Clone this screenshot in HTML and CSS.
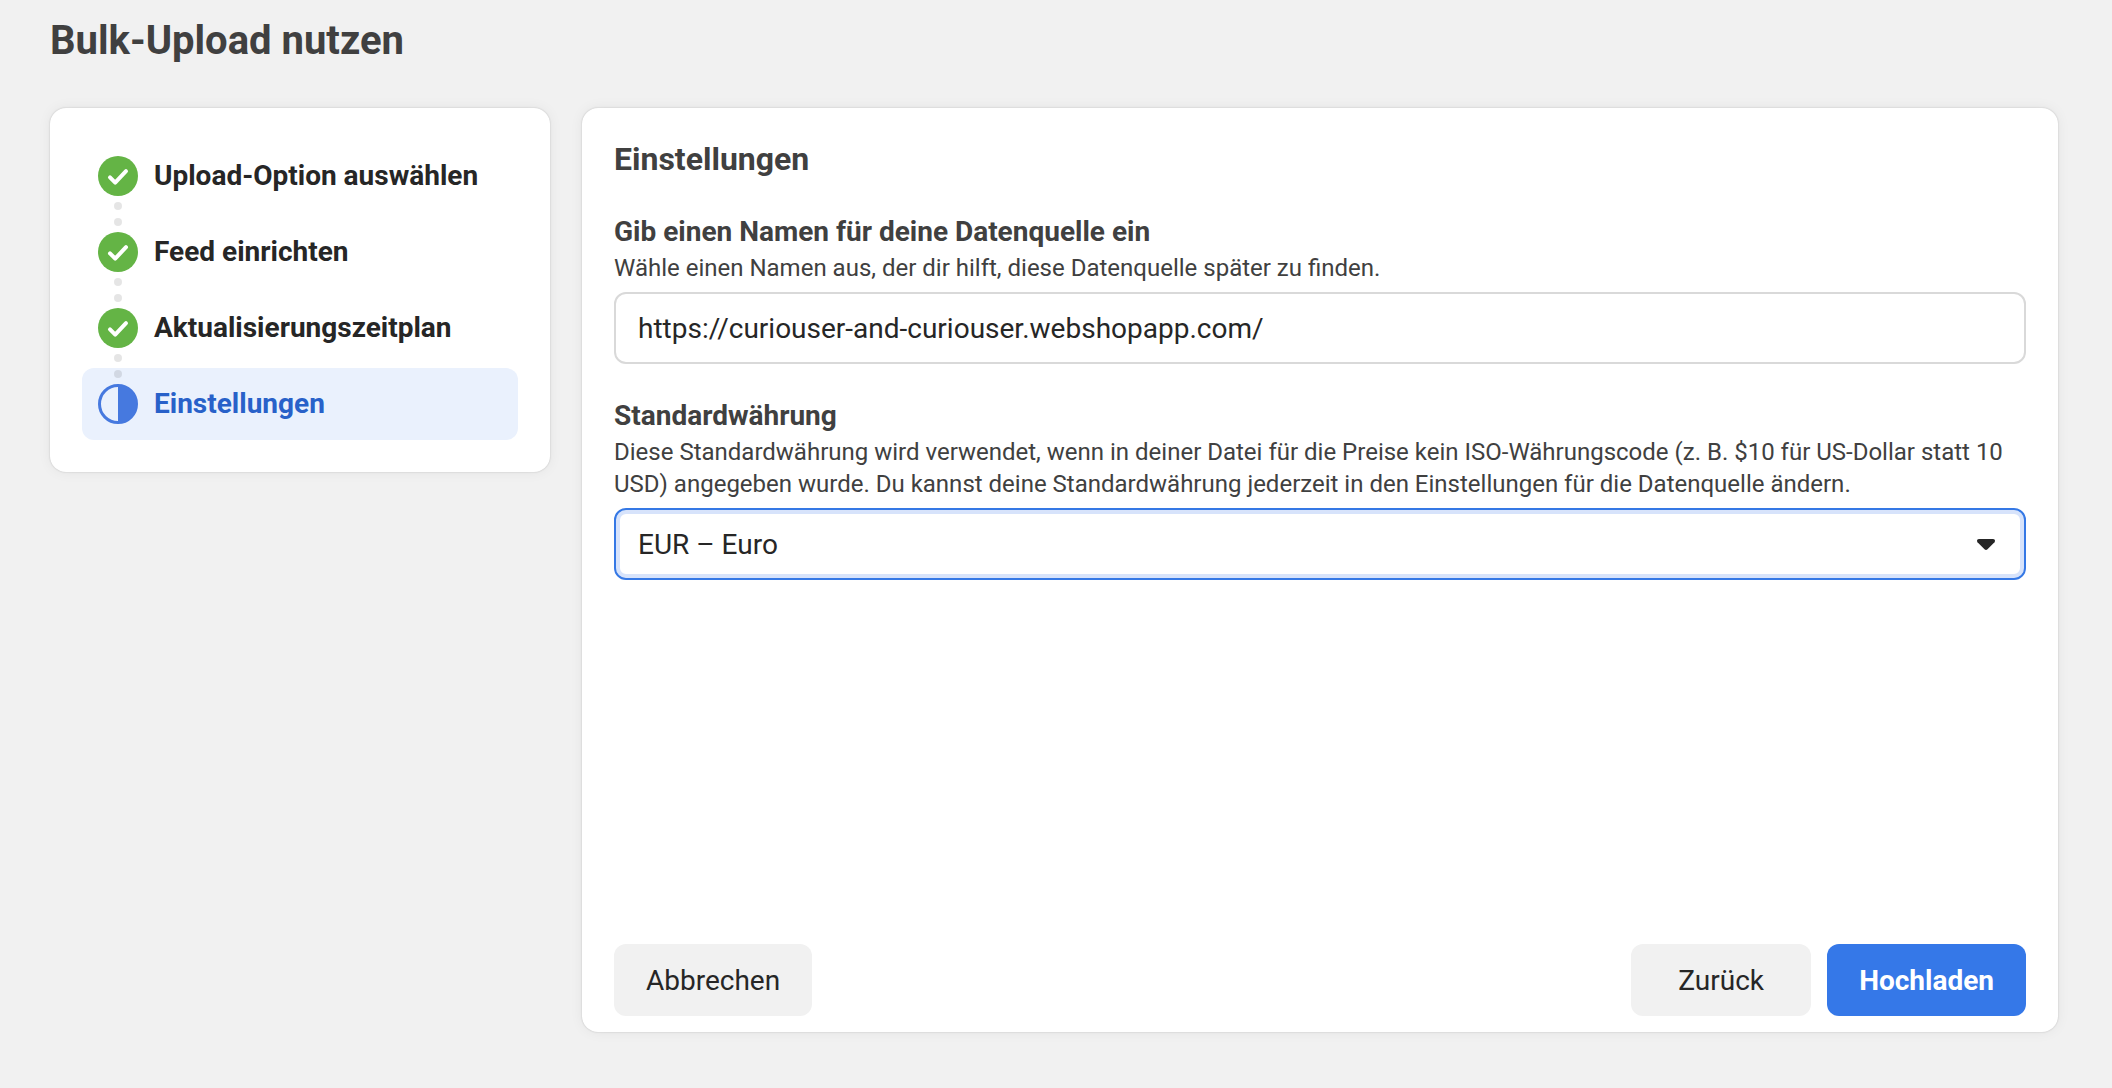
FILE: index.html
```html
<!DOCTYPE html>
<html lang="de">
<head>
<meta charset="utf-8">
<meta name="viewport" content="width=device-width, initial-scale=1">
<title>Bulk-Upload nutzen</title>
<link rel="stylesheet" href="styles.css">
</head>
<body>
<div class="page">
  <h1 class="page-title">Bulk-Upload nutzen</h1>
  <div class="layout">
    <nav class="card steps-card" aria-label="Schritte">
      <ol class="steps">
        <li class="step">
          <svg class="step-icon" viewBox="0 0 40 40" aria-hidden="true"><circle cx="20" cy="20" r="20" fill="#64b445"/><path d="M12 21.4l5.200 5.200L28 15.200" fill="none" stroke="#fff" stroke-width="4" stroke-linecap="round" stroke-linejoin="round"/></svg>
          <span>Upload-Option auswählen</span>
        </li>
        <li class="step">
          <svg class="step-icon" viewBox="0 0 40 40" aria-hidden="true"><circle cx="20" cy="20" r="20" fill="#64b445"/><path d="M12 21.4l5.200 5.200L28 15.200" fill="none" stroke="#fff" stroke-width="4" stroke-linecap="round" stroke-linejoin="round"/></svg>
          <span>Feed einrichten</span>
        </li>
        <li class="step">
          <svg class="step-icon" viewBox="0 0 40 40" aria-hidden="true"><circle cx="20" cy="20" r="20" fill="#64b445"/><path d="M12 21.4l5.200 5.200L28 15.200" fill="none" stroke="#fff" stroke-width="4" stroke-linecap="round" stroke-linejoin="round"/></svg>
          <span>Aktualisierungszeitplan</span>
        </li>
        <li class="step step-active" aria-current="step">
          <svg class="step-icon" viewBox="0 0 40 40" aria-hidden="true"><circle cx="20" cy="20" r="18.5" fill="none" stroke="#4679df" stroke-width="3"/><path d="M20 1a19 19 0 0 1 0 38z" fill="#4679df"/></svg>
          <span>Einstellungen</span>
        </li>
      </ol>
    </nav>
    <main class="card settings-card">
      <form class="settings">
        <h2 class="section-title">Einstellungen</h2>
        <div class="field">
          <label class="field-label" for="source-name">Gib einen Namen für deine Datenquelle ein</label>
          <p class="field-help" id="name-help">Wähle einen Namen aus, der dir hilft, diese Datenquelle später zu finden.</p>
          <input class="control" type="text" id="source-name" aria-describedby="name-help" value="https://curiouser-and-curiouser.webshopapp.com/">
        </div>
        <div class="field">
          <label class="field-label" for="currency">Standardwährung</label>
          <p class="field-help" id="currency-help">Diese Standardwährung wird verwendet, wenn in deiner Datei für die Preise kein ISO-Währungscode (z. B. $10 für US-Dollar statt 10 USD) angegeben wurde. Du kannst deine Standardwährung jederzeit in den Einstellungen für die Datenquelle ändern.</p>
          <div class="select-wrap">
            <select class="control control-focused" id="currency" aria-describedby="currency-help">
              <option>EUR – Euro</option>
            </select>
            <svg class="select-arrow" viewBox="0 0 18 12" aria-hidden="true"><path d="M2 0H16C18 0 18.500 2 17.500 3.200L10.500 10.200C9.500 11.200 8.500 11.200 7.500 10.200L.5 3.200C-.5 2 0 0 2 0Z" fill="#262626"/></svg>
          </div>
        </div>
        <div class="actions">
          <button class="button" type="button">Abbrechen</button>
          <div class="actions-end">
            <button class="button" type="button">Zurück</button>
            <button class="button button-primary" type="submit">Hochladen</button>
          </div>
        </div>
      </form>
    </main>
  </div>
</div>
</body>
</html>
```
FILE: styles.css
```css
* {
  box-sizing: border-box;
}

body {
  margin: 0;
  background: #f1f1f1;
  color: #262626;
  font-family: Roboto, "Liberation Sans", sans-serif;
  font-size: 28px;
}

.page {
  display: flex;
  flex-direction: column;
  gap: 42px;
  min-height: 100vh;
  padding: 16px 54px 56px 50px;
}

.page-title {
  margin: 0;
  color: #404040;
  font-size: 40px;
  line-height: 50px;
  font-weight: 700;
}

.layout {
  display: grid;
  grid-template-columns: 500px minmax(0, 1fr);
  gap: 32px;
  flex: 1;
}

.card {
  background: #fff;
  border-radius: 16px;
  box-shadow: 0 0 2px rgba(0, 0, 0, 0.2), 0 0 14px rgba(0, 0, 0, 0.06);
}

/* Progress steps */

.steps-card {
  align-self: start;
  padding: 32px;
}

.steps {
  display: flex;
  flex-direction: column;
  gap: 4px;
  margin: 0;
  padding: 0;
  list-style: none;
}

.step {
  position: relative;
  display: flex;
  align-items: center;
  gap: 16px;
  padding: 16px;
  border-radius: 12px;
  line-height: 40px;
  font-weight: 700;
}

/* Pair of dots that leads down from the previous step */
.step + .step::before {
  content: "";
  position: absolute;
  left: 32px;
  top: -14px;
  width: 8px;
  height: 8px;
  border-radius: 50%;
  background: rgba(0, 0, 0, 0.1);
  box-shadow: 0 16px rgba(0, 0, 0, 0.1);
}

.step-active {
  background: #eaf1fd;
  color: #2861c9;
}

.step-icon {
  flex: none;
  width: 40px;
  height: 40px;
}

/* Settings form */

.settings-card {
  display: flex;
  padding: 32px 32px 16px;
}

.settings {
  display: flex;
  flex: 1;
  flex-direction: column;
  gap: 32px;
  min-width: 0;
}

.section-title {
  margin: 0 0 2px;
  color: #404040;
  font-size: 32px;
  line-height: 38px;
  font-weight: 700;
}

.field-label {
  display: block;
  color: #404040;
  line-height: 40px;
  font-weight: 700;
}

.field-help {
  margin: 0 0 8px;
  color: #404040;
  font-size: 24px;
  line-height: 32px;
}

.control {
  display: block;
  width: 100%;
  height: 72px;
  padding: 0 22px;
  border: 2px solid #d9d9d9;
  border-radius: 12px;
  outline: none;
  background: #fff;
  color: #262626;
  font: inherit;
  appearance: none;
}

.control-focused {
  border-color: #3578e5;
  box-shadow: inset 0 0 0 4px #d7e3fb;
}

.select-wrap {
  position: relative;
}

.select-arrow {
  position: absolute;
  right: 31px;
  top: 31px;
  width: 18px;
  height: 12px;
  pointer-events: none;
}

.actions {
  display: flex;
  justify-content: space-between;
  margin-top: auto;
}

.actions-end {
  display: flex;
  gap: 16px;
}

.button {
  min-width: 180px;
  height: 72px;
  padding: 0 32px;
  border: 0;
  border-radius: 12px;
  background: #f1f1f1;
  color: #262626;
  font: inherit;
  cursor: pointer;
}

.button-primary {
  background: #3578e8;
  color: #fff;
  font-weight: 700;
}
```
